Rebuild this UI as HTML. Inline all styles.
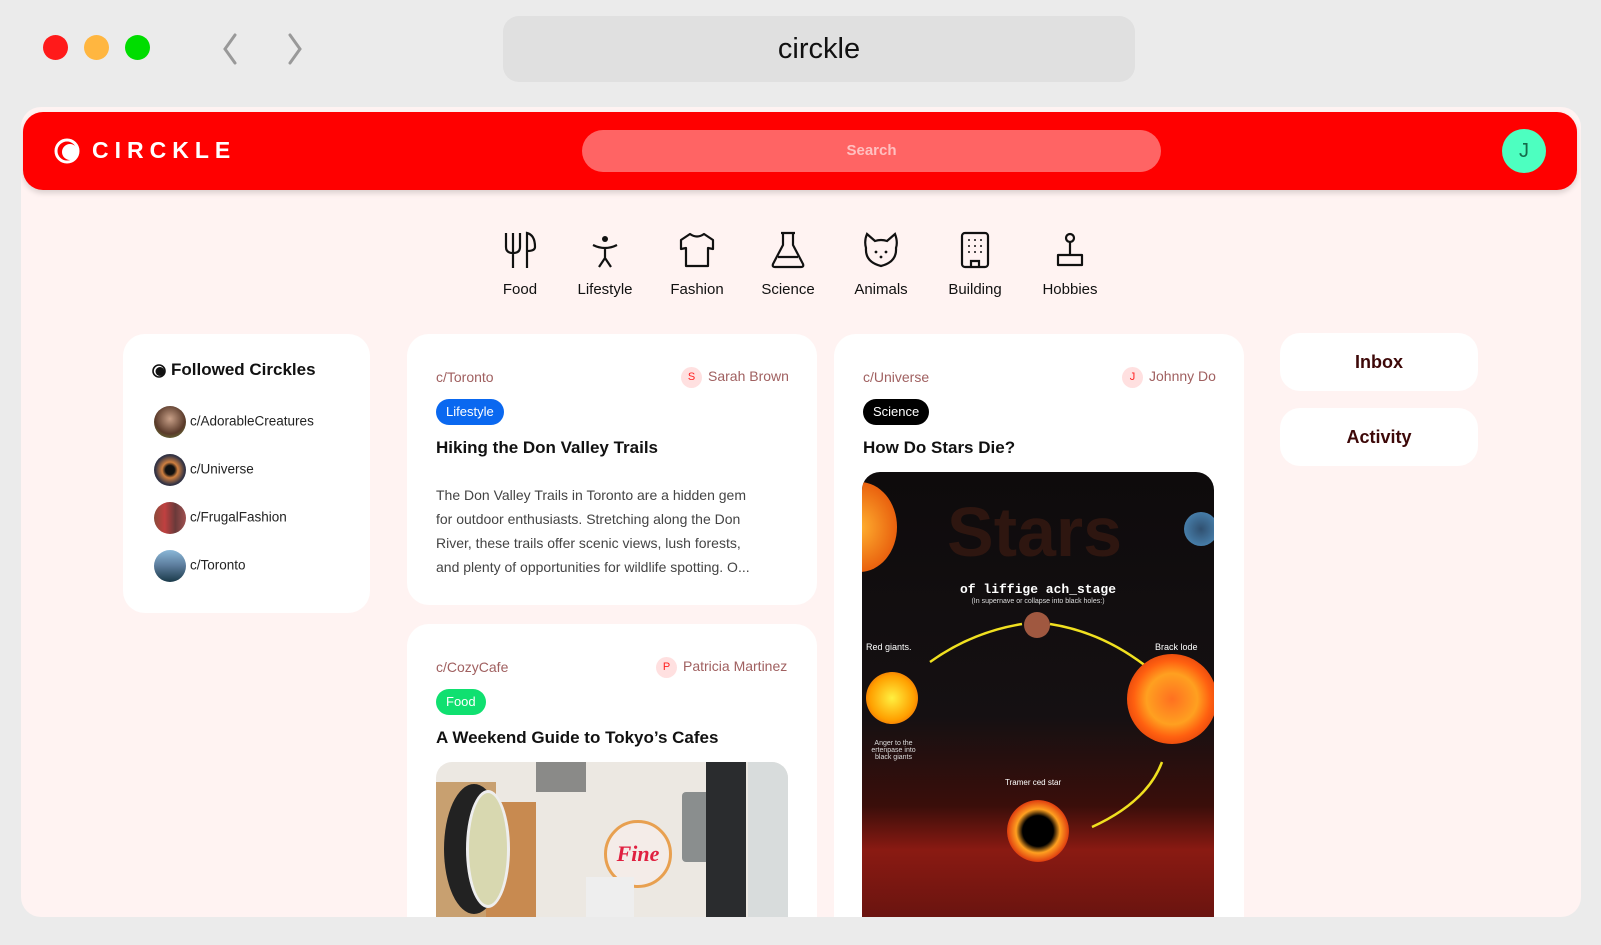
<!DOCTYPE html>
<html><head><meta charset="utf-8"><style>
*{margin:0;padding:0;box-sizing:border-box}
body{width:1601px;height:945px;background:#ebebeb;font-family:"Liberation Sans",sans-serif;position:relative;overflow:hidden;color:#111}
.abs{position:absolute}
.dot{position:absolute;width:25px;height:25px;border-radius:50%;top:35px}
.panel{position:absolute;left:21px;top:107px;width:1560px;height:810px;background:#fff3f2;border-radius:20px;overflow:hidden}
.hdr{position:absolute;left:2px;top:5px;width:1554px;height:78px;background:#ff0000;border-radius:20px;box-shadow:0 3px 6px rgba(0,0,0,.15)}
.card{position:absolute;background:#fff;border-radius:22px}
.cat{position:absolute;top:124px;width:90px;text-align:center;font-size:15px;color:#111}
.cat svg{display:block;margin:0 auto 12px;height:38px}
.meta{position:absolute;font-size:14px;color:#a06060}
.av{display:inline-block;width:21px;height:21px;border-radius:50%;background:#ffe0e0;color:#ff2020;font-size:11px;text-align:center;line-height:21px;margin-right:6px;vertical-align:middle}
.tag{position:absolute;height:26px;border-radius:13px;color:#fff;font-size:13px;line-height:26px;padding:0 10px}
.ttl{position:absolute;font-weight:bold;font-size:17px;color:#111}
.fc{position:absolute;left:133px;font-size:13.5px;color:#222}
.fc i{display:inline-block;width:32px;height:32px;border-radius:50%;vertical-align:middle;margin-right:4px}
.btn{position:absolute;left:1259px;width:198px;height:58px;background:#fff;border-radius:20px;text-align:center;line-height:58px;font-weight:bold;font-size:18px;color:#3d0808}
</style></head><body>
<div class="dot" style="left:43px;background:#ff1a1a"></div>
<div class="dot" style="left:84px;background:#ffb640"></div>
<div class="dot" style="left:125px;background:#00dd00"></div>
<svg class="abs" style="left:218px;top:33px" width="100" height="32"><path d="M17 2 L7 16 L17 30" stroke="#999" stroke-width="3" fill="none" stroke-linecap="round"/><path d="M72 2 L82 16 L72 30" stroke="#999" stroke-width="3" fill="none" stroke-linecap="round"/></svg>
<div class="abs" style="left:503px;top:16px;width:632px;height:66px;background:#e0e0e0;border-radius:16px;text-align:center;line-height:66px;font-size:29px;color:#111">circkle</div>
<div class="panel">
<div class="hdr"></div>
<svg class="abs" style="left:33px;top:31px" width="28" height="28"><circle cx="13" cy="13" r="11" fill="none" stroke="#fff" stroke-width="3"/><circle cx="16" cy="14" r="8" fill="#fff"/></svg>
<div class="abs" style="left:71px;top:30px;color:#fff;font-weight:bold;font-size:23px;letter-spacing:6px">CIRCKLE</div>
<div class="abs" style="left:561px;top:23px;width:579px;height:42px;background:#ff6464;border-radius:21px;text-align:center;line-height:42px;color:#ffc0c0;font-weight:bold;font-size:15px">Search</div>
<div class="abs" style="left:1481px;top:22px;width:44px;height:44px;border-radius:50%;background:#4dffc0;text-align:center;line-height:44px;font-size:20px;color:#146b4a">J</div>

<div class="cat" style="left:454px"><svg width="40" viewBox="0 0 40 38"><path d="M6 2v14q0 6 7 6q7 0 7-6V2M13 2v35M27 37V2q8 2 8 14q0 4-8 4" stroke="#111" stroke-width="2.2" fill="none"/></svg>Food</div>
<div class="cat" style="left:539px"><svg width="40" viewBox="0 0 40 38"><circle cx="20" cy="8" r="3" fill="#111"/><path d="M8 14q12 6 24 0M20 17v10M20 27l-6 9M20 27l6 9" stroke="#111" stroke-width="2.2" fill="none"/></svg>Lifestyle</div>
<div class="cat" style="left:631px"><svg width="40" viewBox="0 0 40 38"><path d="M13 3q7 5 14 0l9 6v9l-5 -1v18H9V17l-5 1V9z" stroke="#111" stroke-width="2.2" fill="none" stroke-linejoin="round"/></svg>Fashion</div>
<div class="cat" style="left:722px"><svg width="40" viewBox="0 0 40 38"><path d="M13 2h14M15 2v12L5 33q-1 3 2 3h26q3 0 2-3L25 14V2M10 26h20" stroke="#111" stroke-width="2.2" fill="none"/></svg>Science</div>
<div class="cat" style="left:815px"><svg width="40" viewBox="0 0 40 38"><path d="M6 3l8 7q6-2 12 0l8-7q3 8 1 14q1 14-15 18Q4 31 5 17Q3 10 6 3z" stroke="#111" stroke-width="2.2" fill="none"/><circle cx="15" cy="21" r="1.4" fill="#111"/><circle cx="25" cy="21" r="1.4" fill="#111"/><circle cx="20" cy="26" r="1.4" fill="#111"/></svg>Animals</div>
<div class="cat" style="left:909px"><svg width="40" viewBox="0 0 40 38"><rect x="7" y="2" width="26" height="34" rx="3" stroke="#111" stroke-width="2.2" fill="none"/><path d="M16 36v-6h8v6" stroke="#111" stroke-width="2.2" fill="none"/><g fill="#111"><circle cx="14" cy="9" r="1"/><circle cx="20" cy="9" r="1"/><circle cx="26" cy="9" r="1"/><circle cx="14" cy="15" r="1"/><circle cx="20" cy="15" r="1"/><circle cx="26" cy="15" r="1"/><circle cx="14" cy="21" r="1"/><circle cx="20" cy="21" r="1"/><circle cx="26" cy="21" r="1"/></g></svg>Building</div>
<div class="cat" style="left:1004px"><svg width="40" viewBox="0 0 40 38"><circle cx="20" cy="7" r="4" stroke="#111" stroke-width="2.2" fill="none"/><path d="M20 11v13M8 24h24v10H8z" stroke="#111" stroke-width="2.2" fill="none" stroke-linejoin="round"/></svg>Hobbies</div>

<div class="card" style="left:102px;top:227px;width:247px;height:279px"></div>
<svg class="abs" style="left:131px;top:257px" width="14" height="14"><circle cx="7" cy="7" r="6" fill="none" stroke="#111" stroke-width="1.6"/><circle cx="8" cy="7.5" r="4.5" fill="#111"/></svg>
<div class="abs" style="left:150px;top:253px;font-weight:bold;font-size:17px">Followed Circkles</div>
<div class="fc" style="top:299px"><i style="background:radial-gradient(circle at 50% 40%,#c8a088,#5a3a2a 60%,#6a8a3a)"></i>c/AdorableCreatures</div>
<div class="fc" style="top:347px"><i style="background:radial-gradient(circle,#111 20%,#d08040 35%,#334 65%)"></i>c/Universe</div>
<div class="fc" style="top:395px"><i style="background:linear-gradient(90deg,#8a4a3a,#c04040,#6a3a3a,#a05050)"></i>c/FrugalFashion</div>
<div class="fc" style="top:443px"><i style="background:linear-gradient(#8ab8d8,#5a7a9a 50%,#1a3a4a)"></i>c/Toronto</div>

<div class="card" style="left:386px;top:227px;width:410px;height:271px"></div>
<div class="meta" style="left:415px;top:262px">c/Toronto</div>
<div class="meta" style="left:660px;top:260px"><span class="av">S</span>Sarah Brown</div>
<div class="tag" style="left:415px;top:292px;background:#0a68f0">Lifestyle</div>
<div class="ttl" style="left:415px;top:331px">Hiking the Don Valley Trails</div>
<div class="abs" style="left:415px;top:376px;width:370px;font-size:14px;line-height:24px;color:#444;white-space:nowrap">The Don Valley Trails in Toronto are a hidden gem<br>for outdoor enthusiasts. Stretching along the Don<br>River, these trails offer scenic views, lush forests,<br>and plenty of opportunities for wildlife spotting. O...</div>

<div class="card" style="left:386px;top:517px;width:410px;height:320px"></div>
<div class="meta" style="left:415px;top:552px">c/CozyCafe</div>
<div class="meta" style="left:635px;top:550px"><span class="av">P</span>Patricia Martinez</div>
<div class="tag" style="left:415px;top:582px;background:#10e070">Food</div>
<div class="ttl" style="left:415px;top:621px">A Weekend Guide to Tokyo’s Cafes</div>
<div class="abs" style="left:415px;top:655px;width:352px;height:155px;border-radius:16px 16px 0 0;overflow:hidden;background:#ece8e2">
 <div class="abs" style="left:100px;top:0;width:50px;height:30px;background:#8a8a88"></div>
 <div class="abs" style="left:0;top:20px;width:60px;height:140px;background:#c8a070"></div>
 <div class="abs" style="left:50px;top:40px;width:50px;height:120px;background:#c88a50"></div>
 <div class="abs" style="left:8px;top:22px;width:60px;height:130px;border-radius:50%;background:#222"></div>
 <div class="abs" style="left:30px;top:28px;width:44px;height:118px;border-radius:50%;background:#d8d8b0;border:3px solid #eee"></div>
 <div class="abs" style="left:168px;top:58px;width:68px;height:68px;border-radius:50%;background:#f4ece8;border:3px solid #e8a050;color:#e02040;font:italic bold 22px 'Liberation Serif',serif;text-align:center;line-height:62px">Fine</div>
 <div class="abs" style="left:150px;top:115px;width:48px;height:50px;background:#eee"></div>
 <div class="abs" style="left:246px;top:30px;width:34px;height:70px;background:#8a8e8e;border-radius:4px"></div>
 <div class="abs" style="left:270px;top:0;width:40px;height:160px;background:#2a2c2e"></div>
 <div class="abs" style="left:312px;top:0;width:40px;height:160px;background:#d8dcdc"></div>
</div>

<div class="card" style="left:813px;top:227px;width:410px;height:620px"></div>
<div class="meta" style="left:842px;top:262px">c/Universe</div>
<div class="meta" style="left:1101px;top:260px"><span class="av">J</span>Johnny Do</div>
<div class="tag" style="left:842px;top:292px;background:#000">Science</div>
<div class="ttl" style="left:842px;top:331px">How Do Stars Die?</div>
<div class="abs" style="left:841px;top:365px;width:352px;height:445px;border-radius:18px 18px 0 0;overflow:hidden;background:linear-gradient(#0e0b0c 0%,#151012 55%,#3a0e0a 75%,#8a1a12 85%,#6a1410 100%)">
 <div class="abs" style="left:-40px;top:10px;width:75px;height:90px;border-radius:50%;background:radial-gradient(#ffb030,#e04000)"></div>
 <div class="abs" style="left:322px;top:40px;width:34px;height:34px;border-radius:50%;background:radial-gradient(#305070,#5090c0)"></div>
 <div class="abs" style="left:85px;top:20px;font:bold 70px 'Liberation Sans',sans-serif;color:#2e1610">Stars</div>
 <div class="abs" style="left:0;top:110px;width:352px;text-align:center;font:bold 13px 'Liberation Mono',monospace;color:#fff">of liffige ach_stage</div>
 <div class="abs" style="left:0;top:126px;width:352px;text-align:center;font-size:7px;color:#ddd">(In supernave or collapse into black holes:)</div>
 <div class="abs" style="left:162px;top:140px;width:26px;height:26px;border-radius:50%;background:#a05840"></div>
 <svg class="abs" style="left:0;top:0" width="352" height="445"><path d="M68 190 Q110 160 160 152 M188 152 Q240 160 285 195 M300 290 Q285 330 230 355" stroke="#f0e020" stroke-width="2.5" fill="none"/></svg>
 <div class="abs" style="left:4px;top:170px;font-size:9px;color:#fff">Red giants.</div>
 <div class="abs" style="left:293px;top:170px;font-size:9px;color:#fff">Brack lode</div>
 <div class="abs" style="left:4px;top:200px;width:52px;height:52px;border-radius:50%;background:radial-gradient(#fff040,#ffa000 60%,#e04010)"></div>
 <div class="abs" style="left:265px;top:182px;width:90px;height:90px;border-radius:50%;background:radial-gradient(#ff7020,#ffa020 40%,#ff6010 60%,#c02008)"></div>
 <div class="abs" style="left:4px;top:268px;width:55px;font-size:7px;color:#ddd;text-align:center">Anger to the ertenpase into black giants</div>
 <div class="abs" style="left:143px;top:306px;font-size:8px;color:#fff">Tramer ced star</div>
 <div class="abs" style="left:145px;top:328px;width:62px;height:62px;border-radius:50%;background:radial-gradient(#000 35%,#ffa020 50%,#e04010 70%,transparent 72%)"></div>
</div>

<div class="btn" style="top:226px">Inbox</div>
<div class="btn" style="top:301px">Activity</div>
</div>
</body></html>
